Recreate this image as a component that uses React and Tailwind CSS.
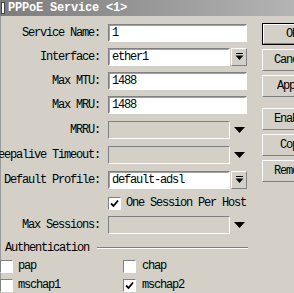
import React from 'react';

const font = { fontFamily: '"Liberation Mono", "DejaVu Sans Mono", monospace' };

const Sunken = ({ className = '', children, disabled }) => (
  <div
    className={`h-[18px] border border-t-[#808080] border-l-[#808080] border-b-white border-r-white ${
      disabled ? 'bg-[#d4d0c8]' : 'bg-white'
    } ${className}`}
  >
    <div className={`h-full flex items-center pl-[2px] border border-transparent ${disabled ? '' : 'border-t-[#a0a0a0] border-l-[#a0a0a0]'}`}>
      {children}
    </div>
  </div>
);

const DropButton = () => (
  <div className="w-[16px] h-[18px] ml-[1px] bg-[#d4d0c8] border border-t-white border-l-white border-b-[#808080] border-r-[#808080] flex items-center justify-center">
    <svg width="9" height="9" viewBox="0 0 9 9">
      <rect x="1" y="0" width="7" height="1" fill="#000" />
      <path d="M0.5 2.5h8L4.5 7z" fill="#000" />
    </svg>
  </div>
);

const Arrow = () => (
  <div className="w-[16px] h-[18px] ml-[1px] flex items-center justify-center">
    <svg width="11" height="6" viewBox="0 0 11 6">
      <path d="M0 0h11L5.5 6z" fill="#000" />
    </svg>
  </div>
);

const Check = ({ checked }) => (
  <div className="w-[13px] h-[13px] bg-white border border-t-[#808080] border-l-[#808080] border-b-white border-r-white flex items-center justify-center shrink-0">
    {checked && (
      <svg width="9" height="9" viewBox="0 0 9 9">
        <path d="M1 4.5l2.5 2.5L8 1.5" stroke="#000" strokeWidth="1.8" fill="none" />
      </svg>
    )}
  </div>
);

const Row = ({ label, className = '', children }) => (
  <div className={`flex items-center h-[18px] ${className}`}>
    <div className="w-[100px] shrink-0 text-right whitespace-nowrap flex justify-end overflow-visible">
      <span>{label}</span>
    </div>
    <div className="ml-[8px] flex items-center">{children}</div>
  </div>
);

const Btn = ({ label, def, className = '' }) => (
  <div
    className={`w-[60px] h-[22px] bg-[#d4d0c8] flex items-center justify-center ${
      def ? 'border border-black' : ''
    } ${className}`}
  >
    <div className="w-full h-full border border-t-white border-l-white border-b-[#808080] border-r-[#808080] flex items-center justify-center">
      {label}
    </div>
  </div>
);

export default function App() {
  return (
    <div
      className="w-[294px] h-[293px] overflow-hidden bg-[#d4d0c8] text-black text-[12px] leading-none tracking-[-1.2px]"
      style={font}
    >
      {/* title bar */}
      <div className="h-[16px] flex items-center bg-gradient-to-r from-[#7c7c7c] to-[#b4b4b4]">
        <div className="ml-[1px] w-[4px] h-[12px] bg-white border border-[#404040]" />
        <span className="ml-[3px] text-white font-bold tracking-[-0.2px]">PPPoE Service &lt;1&gt;</span>
      </div>

      <div className="flex border-l border-[#9a9a9a] h-full">
        {/* form */}
        <div className="w-[262px] shrink-0 pt-[8px] -ml-[1px]">
          <Row label="Service Name:">
            <Sunken className="w-[139px]">1</Sunken>
          </Row>
          <Row label="Interface:" className="mt-[6px]">
            <Sunken className="w-[122px]">ether1</Sunken>
            <DropButton />
          </Row>
          <Row label="Max MTU:" className="mt-[6px]">
            <Sunken className="w-[139px]">1488</Sunken>
          </Row>
          <Row label="Max MRU:" className="mt-[6px]">
            <Sunken className="w-[139px]">1488</Sunken>
          </Row>
          <Row label="MRRU:" className="mt-[7px]">
            <Sunken className="w-[122px]" disabled />
            <Arrow />
          </Row>
          <Row label="Keepalive Timeout:" className="mt-[7px]">
            <Sunken className="w-[122px]" disabled />
            <Arrow />
          </Row>
          <Row label="Default Profile:" className="mt-[7px]">
            <Sunken className="w-[122px]">default-adsl</Sunken>
            <DropButton />
          </Row>
          <div className="mt-[7px] h-[14px] flex items-center pl-[108px]">
            <Check checked />
            <span className="ml-[5px] whitespace-nowrap">One Session Per Host</span>
          </div>
          <Row label="Max Sessions:" className="mt-[6px]">
            <Sunken className="w-[122px]" disabled />
            <Arrow />
          </Row>

          {/* authentication group */}
          <div className="mt-[8px] flex items-center h-[12px] pl-[5px]">
            <span className="whitespace-nowrap">Authentication</span>
            <div className="ml-[8px] w-[151px] border-t border-b border-t-[#808080] border-b-white" />
          </div>
          <div className="mt-[5px] grid grid-cols-[123px_1fr] gap-y-[5px]">
            <div className="flex items-center h-[14px]">
              <Check />
              <span className="ml-[5px]">pap</span>
            </div>
            <div className="flex items-center h-[14px]">
              <Check />
              <span className="ml-[6px]">chap</span>
            </div>
            <div className="flex items-center h-[14px]">
              <Check />
              <span className="ml-[5px]">mschap1</span>
            </div>
            <div className="flex items-center h-[14px]">
              <Check checked />
              <span className="ml-[6px]">mschap2</span>
            </div>
          </div>
        </div>

        {/* buttons */}
        <div className="pt-[7px] flex flex-col">
          <Btn label="OK" def />
          <Btn label="Cancel" className="mt-[4px]" />
          <Btn label="Apply" className="mt-[4px]" />
          <Btn label="Enable" className="mt-[11px]" />
          <Btn label="Copy" className="mt-[4px]" />
          <Btn label="Remove" className="mt-[4px]" />
        </div>
      </div>
    </div>
  );
}
